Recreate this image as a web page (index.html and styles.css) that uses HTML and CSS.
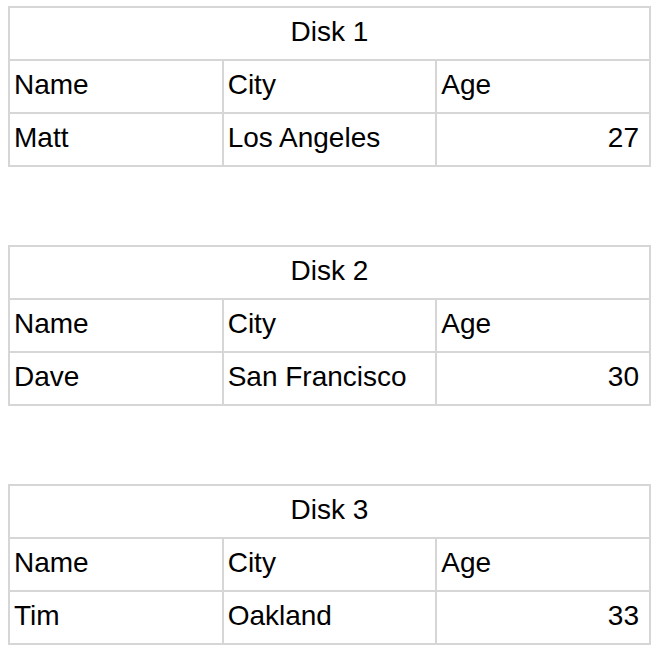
FILE: index.html
```html
<!DOCTYPE html>
<html>
<head>
<meta charset="utf-8">
<link rel="stylesheet" href="styles.css">
</head>
<body>
<div class="page">
  <table class="disk">
    <tr><td class="title" colspan="3">Disk 1</td></tr>
    <tr><td>Name</td><td>City</td><td>Age</td></tr>
    <tr><td>Matt</td><td>Los Angeles</td><td class="num">27</td></tr>
  </table>
  <table class="disk">
    <tr><td class="title" colspan="3">Disk 2</td></tr>
    <tr><td>Name</td><td>City</td><td>Age</td></tr>
    <tr><td>Dave</td><td>San Francisco</td><td class="num">30</td></tr>
  </table>
  <table class="disk">
    <tr><td class="title" colspan="3">Disk 3</td></tr>
    <tr><td>Name</td><td>City</td><td>Age</td></tr>
    <tr><td>Tim</td><td>Oakland</td><td class="num">33</td></tr>
  </table>
</div>
</body>
</html>
```
FILE: styles.css
```css
html, body {
  margin: 0;
  padding: 0;
  background: #ffffff;
}
.page {
  padding: 6px 0 0 8px;
  display: flex;
  flex-direction: column;
  gap: 78px;
  font-family: "Liberation Sans", Arial, sans-serif;
  font-size: 28px;
  color: #000000;
}
.disk {
  border-collapse: collapse;
  table-layout: fixed;
  width: 643px;
  border: 2px solid #d6d6d6;
}
.disk td {
  border: 2px solid #d6d6d6;
  height: 53px;
  box-sizing: border-box;
  padding: 0 4px 3px 4px;
  vertical-align: middle;
  white-space: nowrap;
}
.disk td.title {
  text-align: center;
}
.disk td.num {
  text-align: right;
  padding-right: 10px;
}
```
